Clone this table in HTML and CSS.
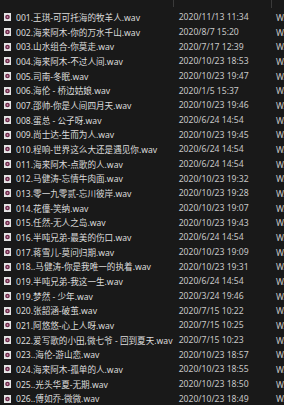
FILE: index.html
```html
<!DOCTYPE html>
<html lang="zh">
<head>
<meta charset="utf-8">
<link rel="stylesheet" href="styles.css">
</head>
<body>
<div class="list">
  <div class="header">
    <div class="hcell hname"><span>名称</span></div>
    <div class="hcell hdate"><span>修改日期</span></div>
    <div class="hcell htype"><span>类型</span></div>
  </div>
  <div class="rows" id="rows"></div>
</div>
<script src="app.js"></script>
</body>
</html>
```
FILE: app.js
```js
const data = [
["001.王琪-可可托海的牧羊人.wav","2020/11/13 11:34"],
["002.海来阿木-你的万水千山.wav","2020/8/7 15:20"],
["003.山水组合-你莫走.wav","2020/7/17 12:39"],
["004.海来阿木-不过人间.wav","2020/10/23 18:53"],
["005.司南-冬眠.wav","2020/10/23 19:47"],
["006.海伦 - 桥边姑娘.wav","2020/1/5 15:37"],
["007.邵帅-你是人间四月天.wav","2020/10/23 19:46"],
["008.蛋总 - 公子呀.wav","2020/6/24 14:54"],
["009.尚士达-生而为人.wav","2020/10/23 19:45"],
["010.程响-世界这么大还是遇见你.wav","2020/6/24 14:54"],
["011.海来阿木-点歌的人.wav","2020/6/24 14:54"],
["012.马健涛-忘情牛肉面.wav","2020/10/23 19:32"],
["013.零一九零贰-忘川彼岸.wav","2020/10/23 19:28"],
["014.花僮-笑纳.wav","2020/10/23 19:07"],
["015.任然-无人之岛.wav","2020/10/23 19:43"],
["016.半吨兄弟-最美的伤口.wav","2020/6/24 14:54"],
["017.蒋雪儿-莫问归期.wav","2020/10/23 19:09"],
["018..马健涛-你是我唯一的执着.wav","2020/10/23 19:31"],
["019.半吨兄弟-我这一生.wav","2020/6/24 14:54"],
["019.梦然 - 少年.wav","2020/3/24 19:46"],
["020.张韶涵-破茧.wav","2020/7/15 10:22"],
["021.阿悠悠-心上人呀.wav","2020/7/15 10:25"],
["022.爱写歌的小田,微七爷 - 回到夏天.wav","2020/7/15 10:23"],
["023..海伦-游山恋.wav","2020/10/23 18:57"],
["024.海来阿木-孤单的人.wav","2020/10/23 18:55"],
["025..光头华夏-无期.wav","2020/10/23 18:50"],
["026..傅如乔-微微.wav","2020/10/23 18:49"]
];
const icon = '<svg class="icon" viewBox="0 0 7 8" width="7" height="8"><rect x="0" y="0" width="7" height="8" fill="#e4e4e4"/><circle cx="3.5" cy="4" r="2.3" fill="#6a2747"/><circle cx="3.5" cy="4" r="0.9" fill="#c98fa8"/></svg>';
const rows = document.getElementById('rows');
rows.innerHTML = data.map(([n, d]) =>
  `<div class="row"><div class="ic">${icon}</div><div class="name">${n}</div><div class="date">${d}</div><div class="type">WAV 文件</div></div>`
).join('');
```
FILE: styles.css
```css
html, body {
  margin: 0;
  padding: 0;
  background: #191919;
  overflow: hidden;
}
body {
  font-family: "Noto Sans", "Noto Sans CJK SC", sans-serif;
  font-size: 8.6px;
  color: #dcdcdc;
}
.list {
  display: flex;
  flex-direction: column;
  width: 284px;
  overflow: hidden;
}
.header {
  display: flex;
  height: 10px;
  overflow: hidden;
}
.hcell {
  display: flex;
  align-items: flex-end;
  flex-shrink: 0;
  color: #8a8a8a;
  box-sizing: border-box;
  overflow: hidden;
}
.hcell span {
  line-height: 13px;
  margin-bottom: 6px;
  white-space: nowrap;
}
.hname {
  width: 174px;
  padding-left: 4px;
  border-right: 1px solid #3a3a3a;
  height: 7px;
}
.hdate {
  width: 98px;
  padding-left: 4px;
  border-right: 1px solid #3a3a3a;
  height: 8px;
}
.htype {
  padding-left: 4px;
  height: 8px;
}
.rows {
  display: flex;
  flex-direction: column;
}
.row {
  display: flex;
  align-items: center;
  height: 14.68px;
  white-space: nowrap;
  overflow: hidden;
}
.ic {
  width: 16px;
  flex-shrink: 0;
  padding-left: 4px;
  box-sizing: border-box;
  display: flex;
  align-items: center;
}
.icon { display: block; }
.name {
  width: 162.7px;
  flex-shrink: 0;
  overflow: hidden;
}
.date {
  width: 97.3px;
  flex-shrink: 0;
  color: #c8c8c8;
}
.type {
  flex-shrink: 0;
  color: #c8c8c8;
}
```
